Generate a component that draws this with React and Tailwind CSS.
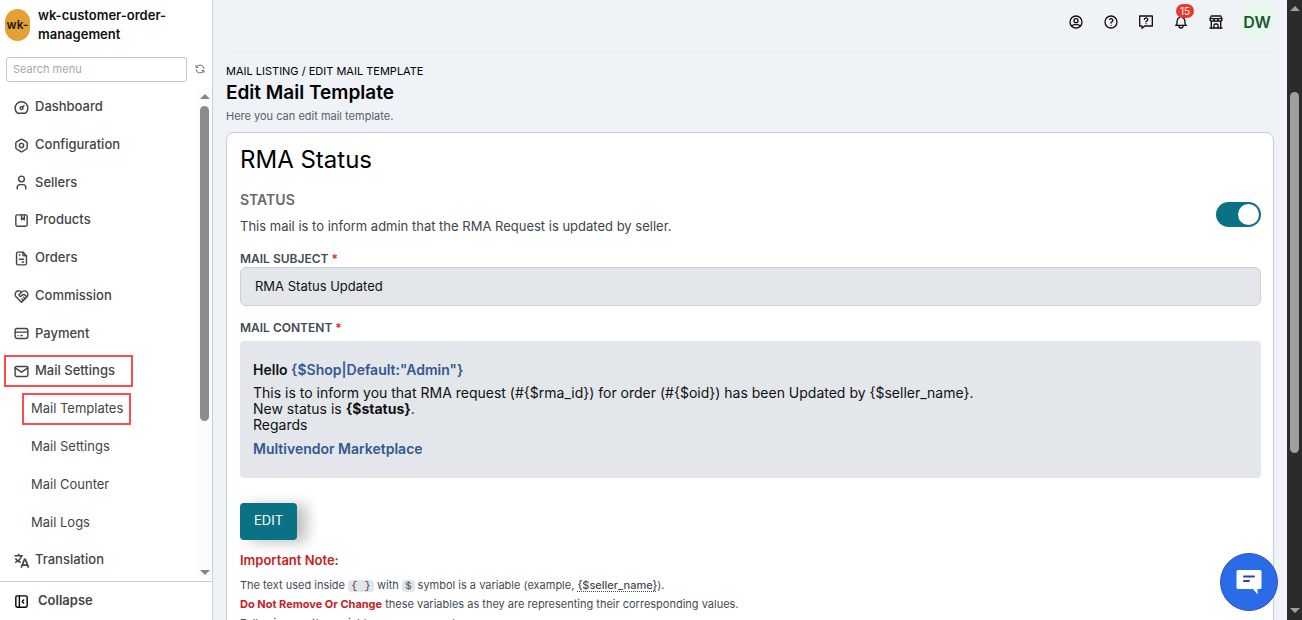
import {
  TbDashboard, TbNut, TbUser, TbAlbum, TbFileInvoice, TbHeartHandshake, TbCreditCard, TbMail,
  TbLayoutSidebarLeftCollapse, TbRefresh, TbUserCircle, TbHelp, TbBell, TbBuildingStore,
} from "react-icons/tb";

function TranslateIcon({ className }) {
  return (
    <svg viewBox="0 0 24 24" fill="none" stroke="currentColor" strokeWidth="2.200" className={className} aria-hidden="true">
      <path d="M2 5.200h12M8 2.500v2.700M12 5.500c-1 4-4.500 7.500-9 9.500M3.500 9c1.500 3 4 4.800 7.500 5.500" />
      <path d="M11.500 22l4.700-11.500h1.200L22 22M13.300 18.500h7" strokeWidth="2.400" />
    </svg>
  );
}

const MENU = [
  { label: "Dashboard", icon: TbDashboard },
  { label: "Configuration", icon: TbNut },
  { label: "Sellers", icon: TbUser },
  { label: "Products", icon: TbAlbum },
  { label: "Orders", icon: TbFileInvoice },
  { label: "Commission", icon: TbHeartHandshake },
  { label: "Payment", icon: TbCreditCard },
  { label: "Mail Settings", icon: TbMail, marked: true },
  { label: "Mail Templates", sub: true, marked: true },
  { label: "Mail Settings", sub: true },
  { label: "Mail Counter", sub: true },
  { label: "Mail Logs", sub: true },
  { label: "Translation", icon: TranslateIcon },
];

function MenuItem({ label, icon: Icon, sub, marked }) {
  const frame = marked ? "border-[#ff4a4a]" : "border-transparent";
  return (
    <li className="flex min-h-0 flex-1 items-center">
      <a
        href="#"
        className={
          sub
            ? `ml-[22px] flex h-8 items-center border-2 pr-[6px] pl-[7px] ${frame}`
            : `ml-1 flex h-8 items-center gap-[5px] border-2 pl-[7px] pr-4 font-medium ${frame}`
        }
      >
        {Icon && <Icon className="mt-px size-[17px] shrink-0" />}
        {label}
      </a>
    </li>
  );
}

function Arrow({ up, className }) {
  return (
    <svg viewBox="0 0 10 5" className={`h-[5px] w-[10px] ${className ?? ""}`} aria-hidden="true">
      <path d={up ? "M0 5L5 0L10 5Z" : "M0 0L5 5L10 0Z"} fill="currentColor" />
    </svg>
  );
}

function Sidebar() {
  return (
    <aside className="flex w-[213px] shrink-0 flex-col border-r border-[#c9cfdc] bg-white text-[#444444]">
      <div className="flex items-center gap-2 px-[5px] pt-[6px]">
        <div className="flex h-8 w-[25px] shrink-0 items-center justify-center rounded-full bg-[#e3a033] text-xs font-semibold text-[#1d1a12]">
          wk-
        </div>
        <div className="text-[13px] leading-[19px] font-semibold text-[#111111]">wk-customer-order-management</div>
      </div>
      <div className="mt-[13px] flex items-center gap-[7px] pr-[6px] pl-[6px]">
        <input
          type="text"
          aria-label="Search menu"
          placeholder="Search menu"
          className="h-[25px] w-full min-w-0 rounded-[3px] border border-[#c3c7cf] px-[6px] pb-px text-[11px] outline-none placeholder:text-[#a3a8ae]"
        />
        <button type="button" aria-label="Refresh menu" className="pb-[2px] text-[#6b7075]">
          <TbRefresh className="size-3" />
        </button>
      </div>
      <div className="mt-[6px] flex min-h-0 flex-1 pb-[2px]">
        <ul className="flex flex-1 flex-col text-[13px]">
          {MENU.map((item, i) => (
            <MenuItem key={i} {...item} />
          ))}
        </ul>
        <div className="flex w-[15px] flex-col items-center bg-[#fcfcfc] pt-[6px] pb-[4px] text-[#858585]">
          <Arrow up />
          <div className="mt-[7px] h-[315px] w-[9px] rounded-full bg-[#8b8b8b]" />
          <Arrow className="mt-auto" />
        </div>
      </div>
      <div className="border-t border-[#c9ced6] px-[13px]">
        <button type="button" className="flex h-[38px] items-center gap-2 text-[13px] font-semibold">
          <TbLayoutSidebarLeftCollapse className="size-[17px] text-black" />
          Collapse
        </button>
      </div>
    </aside>
  );
}

function QuestionBubble() {
  return (
    <svg viewBox="0 0 24 24" fill="none" stroke="currentColor" strokeWidth="2" strokeLinecap="round" strokeLinejoin="round" className="size-4">
      <path d="M2.500 3h19v15h-11.500l-4 3.500v-3.500h-3.500z" />
      <path d="M9.500 8a2.600 2.200 0 1 1 3.800 2.200c-.9.500-1.300.9-1.300 1.500M12 14.500v.01" />
    </svg>
  );
}

function TopBar() {
  return (
    <header className="flex h-[52px] items-center justify-end border-b border-[#e8ebf1] pb-[7px] text-[#111111]">
      <div className="flex items-center gap-[19px]">
        <button type="button" aria-label="Account"><TbUserCircle className="size-4" /></button>
        <button type="button" aria-label="Help"><TbHelp className="size-4" /></button>
        <button type="button" aria-label="Support"><QuestionBubble /></button>
        <button type="button" aria-label="Notifications" className="relative">
          <TbBell className="size-4" />
          <span className="absolute -top-[10px] left-[3px] flex h-[14px] w-[18px] items-center justify-center rounded-full bg-[#e8392f] text-[10px] text-white">
            15
          </span>
        </button>
        <button type="button" aria-label="Store"><TbBuildingStore className="size-4" /></button>
      </div>
      <div className="-mr-[2px] ml-[14px] flex size-[38px] items-center justify-center rounded-full bg-[#e8f8ec] text-base font-semibold text-[#1a5632]">
        DW
      </div>
    </header>
  );
}

function Required() {
  return <span className="text-[#e02b2b]">*</span>;
}

function Key({ children }) {
  return <code className="rounded-[3px] bg-[#e2e5e9] px-[3px] font-['Liberation_Mono',monospace] text-[11px] leading-none">{children}</code>;
}

function TemplateCard() {
  return (
    <section className="mt-[8px] min-h-[600px] rounded-lg border border-[#c6ccd8] bg-white pt-[11px] pr-3 pl-[13px]">
      <h2 className="text-2xl leading-8 text-black">RMA Status</h2>
      <div className="mt-[14px] flex items-center justify-between">
        <div>
          <h3 className="text-sm leading-5 font-semibold text-[#66696c]">STATUS</h3>
          <p className="mt-[6px] text-[13px] leading-5 text-[#40454a]">
            This mail is to inform admin that the RMA Request is updated by seller.
          </p>
        </div>
        <label className="mt-[2px] flex h-[25px] w-[45px] cursor-pointer items-center rounded-full bg-[#0b7285] p-[2px] has-checked:justify-end">
          <input type="checkbox" defaultChecked aria-label="Status" className="sr-only" />
          <span className="size-[21px] rounded-full bg-white" />
        </label>
      </div>
      <label htmlFor="subject" className="mt-[15px] block text-xs leading-4 font-semibold text-[#444b54]">
        MAIL SUBJECT <Required />
      </label>
      <input
        id="subject"
        readOnly
        defaultValue="RMA Status Updated"
        className="block h-[39px] w-full rounded-md border border-[#c9d0dc] bg-[#e3e6ea] px-[14px] pb-[2px] text-[13px] text-[#111111] outline-none"
      />
      <h3 className="mt-[14px] text-xs leading-4 font-semibold text-[#444b54]">
        MAIL CONTENT <Required />
      </h3>
      <div className="mt-[5px] rounded bg-[#e3e6ea] px-[13px] pt-[18px] pb-[18px] text-sm leading-4 text-[#111111]">
        <p className="leading-[22px] font-semibold">
          Hello <span className="text-[#35588f]">{'{$Shop|Default:"Admin"}'}</span>
        </p>
        <p className="mt-[4px]">
          {"This is to inform you that RMA request (#{$rma_id}) for order (#{$oid}) has been Updated by {$seller_name}."}
          <br />
          New status is <b>{"{$status}"}</b>.
          <br />
          Regards
        </p>
        <p className="mt-[5px] leading-[22px] font-semibold text-[#35588f]">Multivendor Marketplace</p>
      </div>
      <button type="button" className="mt-[25px] block h-[37px] rounded bg-[#0b7285] px-[14px] pb-px text-[13px] text-white shadow-[10px_2px_14px_rgba(0,0,0,0.25)]">
        EDIT
      </button>
      <h4 className="mt-[10px] text-[13px] leading-5 font-semibold text-[#c5221f]">Important Note:</h4>
      <div className="mt-[6px] text-[11px] leading-[19px] text-[#444b54]">
        <p>
          The text used inside <Key>{"{ }"}</Key> with <Key>$</Key> symbol is a variable (example,{" "}
          <span className="font-medium underline decoration-dotted underline-offset-2">{"{$seller_name}"}</span>).
        </p>
        <p>
          <b className="text-[#c5221f]">Do Not Remove Or Change</b> these variables as they are representing their
          corresponding values.
        </p>
        <p>Following are the variables you may need:</p>
      </div>
    </section>
  );
}

function ChatButton() {
  return (
    <button
      type="button"
      aria-label="Open chat"
      className="fixed right-6 bottom-[9px] flex size-[58px] items-center justify-center rounded-full border border-[#3a50c8] bg-[#2a6be8]"
    >
      <svg viewBox="0 0 26 26" className="size-[26px]">
        <path d="M2 1h22a1.500 1.500 0 0 1 1.500 1.500v16a1.500 1.500 0 0 1-1.500 1.500h-2.500v5.500l-4.500-5.500H2a1.500 1.500 0 0 1-1.500-1.500v-16A1.500 1.500 0 0 1 2 1z" fill="#ffffff" />
        <path d="M8 7.500h10M8 12h5" stroke="#3442a5" strokeWidth="2" strokeLinecap="round" />
      </svg>
    </button>
  );
}

export default function App() {
  return (
    <div className="flex h-screen overflow-hidden bg-[#eff2f7] font-['Inter',sans-serif]">
      <Sidebar />
      <main className="min-w-0 flex-1 overflow-hidden px-[13px]">
        <TopBar />
        <nav className="mt-[11px] text-[11px] leading-4 text-black">
          <a href="#">MAIL LISTING</a> / EDIT MAIL TEMPLATE
        </nav>
        <h1 className="mt-px text-[19px] leading-[26px] font-semibold text-black">Edit Mail Template</h1>
        <p className="mt-[2px] text-[11px] leading-4 text-[#57606a]">Here you can edit mail template.</p>
        <TemplateCard />
      </main>
      <div className="flex w-[15px] shrink-0 flex-col items-center bg-[#2b2b2b] pt-[6px] pb-[7px] text-[#a0a0a0]">
        <Arrow up />
        <div className="mt-[81px] h-[361px] w-[9px] rounded-full bg-[#9f9f9f]" />
        <Arrow className="mt-auto" />
      </div>
      <ChatButton />
    </div>
  );
}
